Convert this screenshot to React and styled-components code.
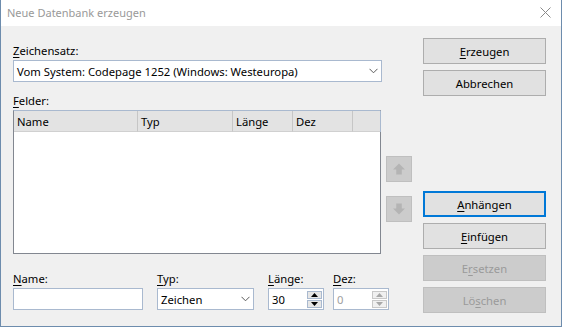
import React from "react";
import styled, { createGlobalStyle } from "styled-components";

const GlobalStyle = createGlobalStyle`
    html, body {
        margin: 0;
        padding: 0;
        background: #ffffff;
    }
    body {
        font-family: "Noto Sans", "Open Sans", sans-serif;
        font-size: 11.25px;
        color: #000000;
    }
`;

const U = styled.span`
    text-decoration: underline;
    text-underline-offset: 2px;
`;

const Chevron = () => (
    <svg width="9" height="6" viewBox="0 0 9 6">
        <path d="M0.5 0.8 L4.5 4.8 L8.5 0.8" fill="none" stroke="#5a5a5a" strokeWidth="1" />
    </svg>
);

const CloseIcon = () => (
    <svg width="11" height="11" viewBox="0 0 11 11">
        <path d="M0.5 0.5 L10.5 10.5 M10.5 0.5 L0.5 10.5" stroke="#8a8a8a" strokeWidth="1" />
    </svg>
);

const BigArrow = ({ down }) => (
    <svg width="26" height="26" viewBox="0 0 26 26">
        <g transform={down ? "rotate(180 13 13)" : undefined}>
            <path d="M6.5 13.5 L13 7 L19.5 13.5 L16 13.5 L16 19 L10 19 L10 13.5 Z" fill="#b4b4b4" />
        </g>
    </svg>
);

const SpinArrow = ({ down, disabled }) => (
    <svg width="7" height="4" viewBox="0 0 7 4">
        <path d={down ? "M0 0 L7 0 L3.5 4 Z" : "M0 4 L7 4 L3.5 0 Z"} fill={disabled ? "#a8a8a8" : "#000000"} />
    </svg>
);

const App = () => {
    return (
        <>
            <GlobalStyle />
            <Window>
                <TitleBar>
                    <Title>Neue Datenbank erzeugen</Title>
                    <CloseIcon />
                </TitleBar>
                <Body>
                    <MainColumn>
                        <Label $top={5}>
                            <U>Z</U>eichensatz:
                        </Label>
                        <Combo $width={369}>
                            <span>Vom System: Codepage 1252 (Windows: Westeuropa)</span>
                            <Chevron />
                        </Combo>
                        <Label $top={11}>
                            <U>F</U>elder:
                        </Label>
                        <FieldsRow>
                            <ListView>
                                <ListHeader>
                                    <HeaderCell>Name</HeaderCell>
                                    <HeaderCell>Typ</HeaderCell>
                                    <HeaderCell>Länge</HeaderCell>
                                    <HeaderCell>Dez</HeaderCell>
                                    <HeaderCell />
                                </ListHeader>
                            </ListView>
                            <ArrowColumn>
                                <ArrowButton>
                                    <BigArrow />
                                </ArrowButton>
                                <ArrowButton>
                                    <BigArrow down />
                                </ArrowButton>
                            </ArrowColumn>
                        </FieldsRow>
                        <BottomRow>
                            <FieldGroup $width={130}>
                                <Label $top={0}>
                                    <U>N</U>ame:
                                </Label>
                                <TextBox />
                            </FieldGroup>
                            <FieldGroup $width={97}>
                                <Label $top={0}>
                                    <U>T</U>yp:
                                </Label>
                                <Combo $width={97}>
                                    <span>Zeichen</span>
                                    <Chevron />
                                </Combo>
                            </FieldGroup>
                            <FieldGroup $width={56}>
                                <Label $top={0}>
                                    <U>L</U>änge:
                                </Label>
                                <SpinBox>
                                    <span>30</span>
                                    <SpinButtons>
                                        <SpinButton>
                                            <SpinArrow />
                                        </SpinButton>
                                        <SpinButton>
                                            <SpinArrow down />
                                        </SpinButton>
                                    </SpinButtons>
                                </SpinBox>
                            </FieldGroup>
                            <FieldGroup $width={56} $gap={9}>
                                <Label $top={0}>
                                    <U>D</U>ez:
                                </Label>
                                <SpinBox $disabled>
                                    <span>0</span>
                                    <SpinButtons>
                                        <SpinButton $disabled>
                                            <SpinArrow disabled />
                                        </SpinButton>
                                        <SpinButton $disabled>
                                            <SpinArrow down disabled />
                                        </SpinButton>
                                    </SpinButtons>
                                </SpinBox>
                            </FieldGroup>
                        </BottomRow>
                    </MainColumn>
                    <ButtonColumn>
                        <Button>
                            <U>E</U>rzeugen
                        </Button>
                        <Button>Abbrechen</Button>
                        <Spacer />
                        <Button $default>
                            <U>A</U>nhängen
                        </Button>
                        <Button>
                            <U>E</U>infügen
                        </Button>
                        <Button $disabled>
                            E<U>r</U>setzen
                        </Button>
                        <Button $disabled>
                            Lö<U>s</U>chen
                        </Button>
                    </ButtonColumn>
                </Body>
            </Window>
        </>
    );
};

export default App;

const Window = styled.div`
    width: 562px;
    height: 327px;
    box-sizing: border-box;
    display: flex;
    flex-direction: column;
    border: 1px solid #6d8cad;
    border-top: none;
    background: #f0f0f0;
`;

const TitleBar = styled.div`
    height: 26px;
    flex: none;
    display: flex;
    align-items: center;
    justify-content: space-between;
    padding: 0 10px 0 6px;
    background: #ffffff;

    svg {
        margin-top: -1px;
    }
`;

const Title = styled.div`
    color: #999999;
    font-size: 11px;
    line-height: 26px;
`;

const Body = styled.div`
    flex: 1;
    display: flex;
    padding: 12px 15px 13px 12px;
    gap: 11px;
`;

const MainColumn = styled.div`
    width: 399px;
    flex: none;
    display: flex;
    flex-direction: column;
`;

const Label = styled.div`
    height: 16px;
    line-height: 16px;
    margin-top: ${(p) => p.$top}px;
    margin-bottom: 1px;
    white-space: nowrap;
`;

const Combo = styled.div`
    width: ${(p) => p.$width}px;
    height: 22px;
    box-sizing: border-box;
    display: flex;
    align-items: center;
    justify-content: space-between;
    padding: 0 3px 0 3px;
    background: #ffffff;
    border: 1px solid #a9b9cf;
    white-space: nowrap;

    svg {
        flex: none;
    }
`;

const FieldsRow = styled.div`
    display: flex;
    gap: 5px;
`;

const ListView = styled.div`
    width: 368px;
    height: 144px;
    flex: none;
    box-sizing: border-box;
    background: #ffffff;
    border: 1px solid #828790;
    border-top-color: #a9b9cf;
`;

const ListHeader = styled.div`
    display: grid;
    grid-template-columns: 124px 95px 60px 60px 1fr;
    height: 21px;
    background: #e3e3e3;
    border-right: 1px solid #a9b9cf;
    margin-right: -1px;
`;

const HeaderCell = styled.div`
    display: flex;
    align-items: center;
    padding-left: 3px;
    border-right: 1px solid #c6c6c6;
    border-bottom: 1px solid #d0d0d0;

    &:last-child {
        border-right: none;
    }
`;

const ArrowColumn = styled.div`
    display: flex;
    flex-direction: column;
    gap: 14px;
    padding-top: 46px;
`;

const ArrowButton = styled.div`
    width: 26px;
    height: 26px;
    box-sizing: border-box;
    display: flex;
    align-items: center;
    justify-content: center;
    background: #cccccc;
    border: 1px solid #bfbfbf;
`;

const BottomRow = styled.div`
    display: flex;
    gap: 14px;
    margin-top: 17px;
`;

const FieldGroup = styled.div`
    width: ${(p) => p.$width}px;
    flex: none;
    display: flex;
    flex-direction: column;
    margin-left: ${(p) => (p.$gap ? p.$gap - 14 : 0)}px;
`;

const TextBox = styled.div`
    height: 22px;
    box-sizing: border-box;
    background: #ffffff;
    border: 1px solid #a9b9cf;
`;

const SpinBox = styled.div`
    height: 22px;
    box-sizing: border-box;
    display: flex;
    align-items: center;
    justify-content: space-between;
    padding: 0 1px 0 3px;
    background: #ffffff;
    border: 1px solid #a9b9cf;
    color: ${(p) => (p.$disabled ? "#a0a0a0" : "#000000")};
`;

const SpinButtons = styled.div`
    display: flex;
    flex-direction: column;
    gap: 1px;
`;

const SpinButton = styled.div`
    width: 15px;
    height: 8px;
    box-sizing: border-box;
    display: flex;
    align-items: center;
    justify-content: center;
    background: ${(p) => (p.$disabled ? "#f0f0f0" : "#e6e6e6")};
    border: 1px solid ${(p) => (p.$disabled ? "#c8c8c8" : "#a9b9cf")};
`;

const ButtonColumn = styled.div`
    width: 123px;
    display: flex;
    flex-direction: column;
    gap: 6px;
`;

const Spacer = styled.div`
    flex: 1;
`;

const Button = styled.div`
    height: 26px;
    box-sizing: border-box;
    display: flex;
    align-items: center;
    justify-content: center;
    background: ${(p) => (p.$disabled ? "#cccccc" : "#e1e1e1")};
    border: ${(p) => (p.$default ? "2px solid #0078d7" : p.$disabled ? "1px solid #bfbfbf" : "1px solid #adadad")};
    color: ${(p) => (p.$disabled ? "#9a9a9a" : "#000000")};
    white-space: nowrap;
`;
